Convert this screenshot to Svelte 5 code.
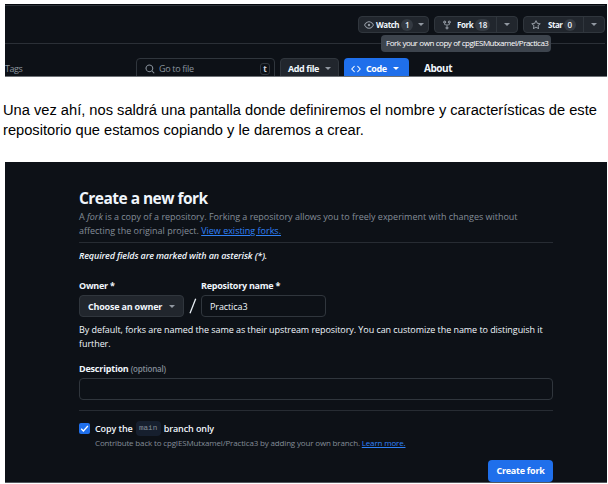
<script>
  const actions = [
    { name: 'Watch', count: 1, icon: 'eye' },
    { name: 'Fork', count: 18, icon: 'fork' },
    { name: 'Star', count: 0, icon: 'star' }
  ];
  const icons = {
    eye: 'M8 2c1.981 0 3.671.992 4.933 2.078 1.27 1.091 2.187 2.345 2.637 3.023a1.62 1.62 0 0 1 0 1.798c-.45.678-1.367 1.932-2.637 3.023C11.67 13.008 9.981 14 8 14s-3.671-.992-4.933-2.078C1.797 10.83.88 9.576.43 8.898a1.62 1.62 0 0 1 0-1.798c.45-.677 1.367-1.931 2.637-3.022C4.33 2.992 6.019 2 8 2ZM1.679 7.932a.12.12 0 0 0 0 .136c.411.622 1.241 1.75 2.366 2.717C5.176 11.758 6.527 12.5 8 12.5s2.825-.742 3.955-1.715c1.124-.967 1.954-2.096 2.366-2.717a.12.12 0 0 0 0-.136c-.412-.621-1.242-1.75-2.366-2.717C10.824 4.242 9.473 3.5 8 3.5s-2.825.742-3.955 1.715c-1.124.967-1.954 2.096-2.366 2.717ZM8 10a2 2 0 1 1 0-4 2 2 0 0 1 0 4Z',
    fork: 'M5 5.372v.878c0 .414.336.75.75.75h4.5a.75.75 0 0 0 .75-.75v-.878a2.25 2.25 0 1 1 1.5 0v.878a2.25 2.25 0 0 1-2.25 2.25h-1.5v2.128a2.251 2.251 0 1 1-1.5 0V8.5h-1.5A2.25 2.25 0 0 1 3.5 6.25v-.878a2.25 2.25 0 1 1 1.5 0ZM5 3.25a.75.75 0 1 0-1.5 0 .75.75 0 0 0 1.5 0Zm6.75.75a.75.75 0 1 0 0-1.5.75.75 0 0 0 0 1.5Zm-3 8.75a.75.75 0 1 0-1.5 0 .75.75 0 0 0 1.5 0Z',
    star: 'M8 .25a.75.75 0 0 1 .673.418l1.882 3.815 4.21.612a.75.75 0 0 1 .416 1.279l-3.046 2.97.719 4.192a.751.751 0 0 1-1.088.791L8 12.347l-3.766 1.98a.75.75 0 0 1-1.088-.79l.72-4.194L.818 6.374a.75.75 0 0 1 .416-1.28l4.21-.611L7.327.668A.75.75 0 0 1 8 .25Zm0 2.445L6.615 5.5a.75.75 0 0 1-.564.41l-3.097.45 2.24 2.184a.75.75 0 0 1 .216.664l-.528 3.084 2.769-1.456a.75.75 0 0 1 .698 0l2.77 1.456-.53-3.084a.75.75 0 0 1 .216-.664l2.24-2.183-3.096-.45a.75.75 0 0 1-.564-.41L8 2.694Z'
  };
</script>

<main>
  <section class="shot top">
    <div class="actions">
      {#each actions as a}
        <div class="btn {a.icon}">
          <svg class="ico" viewBox="0 0 16 16"><path d={icons[a.icon]} /></svg>
          <b>{a.name}</b><span class="count">{a.count}</span>
          <span class="drop"><i class="caret"></i></span>
        </div>
      {/each}
    </div>
    <div class="tip">Fork your own copy of cpgIESMutxamel/Practica3</div>
    <div class="files">
      <span class="tags">Tags</span>
      <div class="search">
        <svg viewBox="0 0 16 16"><path d="M10.68 11.74a6 6 0 0 1-7.922-8.982 6 6 0 0 1 8.982 7.922l3.04 3.04a.749.749 0 1 1-1.06 1.06ZM11.5 7a4.499 4.499 0 1 0-8.997 0A4.499 4.499 0 0 0 11.5 7Z" /></svg>
        <span class="ph">Go to file</span><kbd>t</kbd>
      </div>
      <div class="tab add"><b>Add file</b><i class="caret"></i></div>
      <div class="tab code">
        <svg viewBox="0 0 16 16"><path d="m11.28 3.22 4.25 4.25a.75.75 0 0 1 0 1.06l-4.25 4.25a.749.749 0 1 1-1.06-1.06L13.94 8l-3.72-3.72a.749.749 0 1 1 1.06-1.06Zm-6.56 0a.751.751 0 0 1 1.06 1.06L2.06 8l3.72 3.72a.749.749 0 1 1-1.06 1.06L.47 8.53a.75.75 0 0 1 0-1.06Z" /></svg>
        <b>Code</b><i class="caret"></i>
      </div>
      <b class="about">About</b>
    </div>
  </section>

  <p class="prose">
    Una vez ahí, nos saldrá una pantalla donde definiremos el nombre y características de este<br />
    repositorio que estamos copiando y le daremos a crear.
  </p>

  <section class="shot form">
    <h1>Create a new fork</h1>
    <p class="muted intro">
      A <em>fork</em> is a copy of a repository. Forking a repository allows you to freely experiment with changes without<br />
      affecting the original project. <a href="#forks">View existing forks.</a>
    </p>
    <hr />
    <p class="required">Required fields are marked with an asterisk (*).</p>
    <div class="fields">
      <div class="owner">
        <b class="label">Owner *</b>
        <div class="select"><b>Choose an owner</b><i class="caret"></i></div>
      </div>
      <svg class="slash" viewBox="0 0 8 16"><path d="M1 15.3 6.7.7" /></svg>
      <div class="repo">
        <b class="label">Repository name *</b>
        <div class="input">Practica3</div>
      </div>
    </div>
    <p class="help">
      By default, forks are named the same as their upstream repository. You can customize the name to distinguish it<br />
      further.
    </p>
    <div class="desc"><b>Description</b> <span>(optional)</span></div>
    <div class="input wide"></div>
    <hr class="second" />
    <div class="check">
      <span class="box"><svg viewBox="0 0 12 12"><path d="m2.4 6.3 2.4 2.4 4.9-5.4" /></svg></span>
      <span class="copy">Copy the</span><code>main</code><span class="copy">branch only</span>
    </div>
    <p class="muted sub">Contribute back to cpgIESMutxamel/Practica3 by adding your own branch. <a href="#more">Learn more.</a></p>
    <div class="create">Create fork</div>
  </section>
</main>

<style>
  :global(body) { margin: 0; background: #fff; }
  main {
    width: 608px; height: 484px; box-sizing: border-box; padding: 4px 1px 0 5px;
    overflow: hidden; font-family: "Open Sans", "Noto Sans", sans-serif; font-size: 9px; color: #f0f6fc;
  }
  main * { box-sizing: border-box; }
  p, h1 { margin: 0; }
  b { font-weight: 700; white-space: nowrap; }
  span, p { white-space: nowrap; }
  .shot { background: #0d1117; overflow: hidden; position: relative; }
  .top { height: 73px; border-bottom: 1px solid #6e7277; border-top: 1px solid #05080d; }
  .actions {
    height: 39px; border-top: 1px solid #2b3037; border-bottom: 1px solid #2b3037;
    display: flex; gap: 5px; padding: 10px 0 0 353px; margin-right: 2px;
  }
  .btn {
    height: 17px; display: flex; align-items: center; background: #21262d; border: 1px solid #30363d;
    border-radius: 4px; font-size: 8px; flex: none;
  }
  .btn b { letter-spacing: -0.45px; }
  .eye { width: 71px; padding-left: 5px; }
  .fork { width: 84px; padding-left: 7px; }
  .star { width: 82px; padding-left: 7px; }
  .ico { width: 10px; height: 10px; fill: #9198a1; flex: none; }
  .eye .ico { margin-right: 2px; }
  .fork .ico { margin-right: 5px; }
  .star .ico { margin-right: 7px; }
  .count { min-width: 12px; height: 12px; border-radius: 6px; background: #343a42; text-align: center; line-height: 12px; font-weight: 600; font-size: 8px; letter-spacing: -0.3px; }
  .eye .count { margin-left: 2px; }
  .fork .count { margin-left: 2px; min-width: 15px; }
  .star .count { margin-left: 1px; }
  .drop { margin-left: auto; height: 15px; display: flex; align-items: center; justify-content: center; }
  .eye .drop { width: 15px; }
  .fork .drop, .star .drop { width: 21px; border-left: 1px solid #30363d; }
  .caret { width: 0; height: 0; border: 3px solid transparent; border-top-color: #9198a1; border-bottom: 0; }
  .tip {
    position: absolute; left: 376px; top: 30px; width: 170px; height: 17px; border-radius: 4px; background: #3d444d;
    color: #fff; font-size: 8px; line-height: 16px; padding-left: 5px; letter-spacing: -0.5px; word-spacing: 0.4px; white-space: nowrap;
  }
  .files { display: flex; padding-top: 14px; height: 40px; }
  .tags { width: 131px; color: #8b949e; font-size: 9px; line-height: 21px; letter-spacing: -0.45px; }
  .search { width: 139px; height: 22px; border: 1px solid #30363d; border-radius: 4px; display: flex; align-items: center; padding: 0 4px 0 8px; color: #8b949e; }
  .search svg { width: 10px; height: 10px; fill: #8b949e; margin-right: 4px; }
  .ph { font-size: 9px; letter-spacing: -0.32px; }
  kbd { margin-left: auto; width: 10px; height: 12px; border: 1px solid #30363d; border-radius: 3px; font: 700 8px/9px "Open Sans", sans-serif; text-align: center; color: #c9d1d9; }
  .tab { height: 22px; margin-left: 5px; border-radius: 4px; display: flex; align-items: center; font-size: 9px; }
  .tab b { letter-spacing: -0.4px; }
  .add { width: 59px; background: #21262d; border: 1px solid #30363d; padding: 0 7px; justify-content: space-between; }
  .code { width: 65px; background: #1f6feb; color: #fff; padding: 0 10px 0 7px; }
  .code svg { width: 10px; height: 10px; fill: #fff; margin-right: 5px; }
  .code .caret { margin-left: auto; border-top-color: #fff; }
  .search, .tab { margin-top: -0.5px; }
  .about { margin-left: 15px; font-size: 10px; line-height: 21px; letter-spacing: -0.45px; }

  .prose { height: 85px; padding-top: 23px; margin-left: -2px; color: #000; font: 14.67px/20px "Liberation Sans", Arial, sans-serif; }
  .form { height: 321px; padding: 26px 54px 0 74px; border-bottom: 1px solid #55595f; }
  h1 { font-size: 15.5px; line-height: 20px; letter-spacing: -0.53px; font-weight: 700; white-space: nowrap; }
  .muted { color: #848d97; }
  a { color: #2f81f7; text-decoration: underline; }
  .intro { line-height: 14px; margin-top: 2px; height: 32px; letter-spacing: -0.012px; }
  hr { border: 0; height: 1px; background: #272c33; margin: 0; }
  .required { font-style: italic; font-weight: 600; line-height: 14px; margin-top: 6px; letter-spacing: -0.13px; height: 25px; }
  .fields { display: flex; height: 43px; padding-top: 5px; }
  .label { display: block; line-height: 14px; height: 16px; font-size: 9px; letter-spacing: -0.26px; }
  .select { width: 105px; height: 22px; background: #21262d; border: 1px solid #30363d; border-radius: 4px; display: flex; align-items: center; justify-content: space-between; padding: 0 8px; font-size: 9px; }
  .select b { letter-spacing: -0.2px; }
  .slash { width: 8px; height: 16px; margin: 19px 4px 0 5px; fill: none; stroke: #e6edf3; stroke-width: 1.3; }
  .input { width: 125px; height: 22px; border: 1px solid #30363d; border-radius: 4px; padding-left: 8px; line-height: 21px; letter-spacing: -0.1px; }
  .help { line-height: 14px; margin-top: 6px; letter-spacing: -0.065px; }
  .desc { line-height: 14px; margin-top: 11px; height: 16px; white-space: nowrap; letter-spacing: -0.2px; }
  .desc span { color: #848d97; font-size: 8px; font-weight: 600; }
  .input.wide { width: 474px; }
  .second { margin-top: 10px; }
  .check { display: flex; align-items: center; margin-top: 10px; height: 15px; }
  .box { width: 11px; height: 11px; background: #1f6feb; border-radius: 2px; margin-right: 5px; }
  .box svg { display: block; width: 11px; height: 11px; fill: none; stroke: #fff; stroke-width: 1.4; }
  code { width: 25px; height: 15px; border-radius: 4px; background: #161f2e; color: #848d97; font: 7.6px/15px "Liberation Mono", monospace; text-align: center; margin: 0 3px; }
  .copy { font-weight: 600; letter-spacing: -0.1px; }
  .sub { font-size: 8px; line-height: 12px; margin-left: 16px; margin-top: 1px; letter-spacing: -0.16px; }
  .create { width: 65px; height: 22px; margin: 11px 0 0 auto; border-radius: 4px; background: #1f6feb; color: #fff; font-weight: 700; text-align: center; line-height: 21px; letter-spacing: -0.25px; }
</style>
